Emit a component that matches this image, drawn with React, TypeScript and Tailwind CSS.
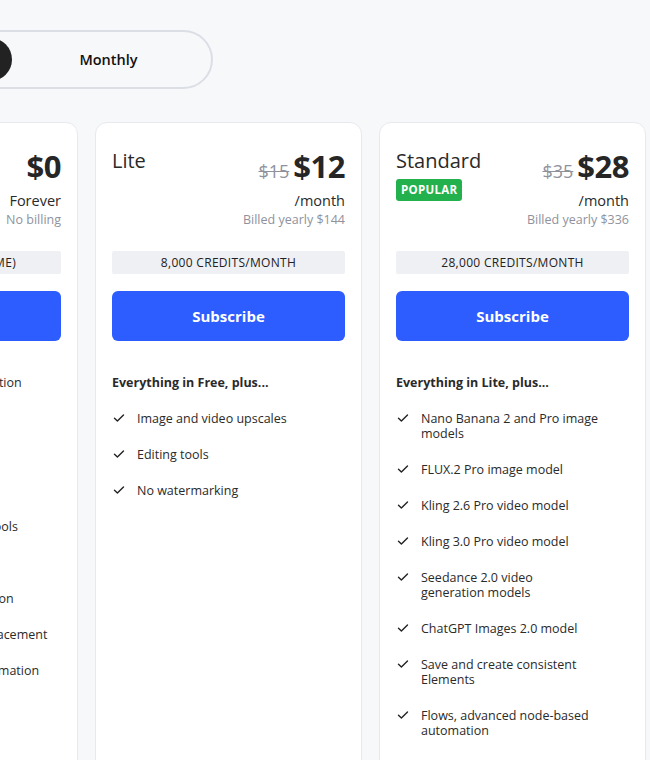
import React from "react";

type Plan = {
  name: string;
  old?: string;
  price: string;
  per: string;
  billed: string;
  credits: string;
  popular?: boolean;
  heading?: string;
  items: string[][];
};

const plans: Plan[] = [
  {
    name: "Free",
    price: "$0",
    per: "Forever",
    billed: "No billing",
    credits: "150 CREDITS (ONE TIME)",
    items: [
      ["Images and video generation"],
      ["Daily free credits"],
      ["Community feed"],
      ["Basic image models"],
      ["Essential image editing tools"],
      ["Infinite canvas"],
      ["Realtime canvas generation"],
      ["Background and sky replacement"],
      ["Flows and workflow automation"],
    ],
  },
  {
    name: "Lite",
    old: "$15",
    price: "$12",
    per: "/month",
    billed: "Billed yearly $144",
    credits: "8,000 CREDITS/MONTH",
    heading: "Everything in Free, plus...",
    items: [["Image and video upscales"], ["Editing tools"], ["No watermarking"]],
  },
  {
    name: "Standard",
    old: "$35",
    price: "$28",
    per: "/month",
    billed: "Billed yearly $336",
    credits: "28,000 CREDITS/MONTH",
    popular: true,
    heading: "Everything in Lite, plus...",
    items: [
      ["Nano Banana 2 and Pro image", "models"],
      ["FLUX.2 Pro image model"],
      ["Kling 2.6 Pro video model"],
      ["Kling 3.0 Pro video model"],
      ["Seedance 2.0 video", "generation models"],
      ["ChatGPT Images 2.0 model"],
      ["Save and create consistent", "Elements"],
      ["Flows, advanced node-based", "automation"],
    ],
  },
];

function Check() {
  return (
    <svg width="12" height="12" viewBox="0 0 12 12" fill="none" className="mt-[1px] shrink-0">
      <path d="M1.5 6.3 L4.4 9 L10.5 3" stroke="#222" strokeWidth="1.4" strokeLinecap="round" strokeLinejoin="round" />
    </svg>
  );
}

function Card({ p }: { p: Plan }) {
  return (
    <div className="w-[267px] shrink-0 bg-white rounded-xl border border-[#e8e9ef] px-4 pt-[25px] pb-10">
      <div className="flex justify-between items-start">
        <div className="flex flex-col items-start">
          <div className="text-[20px] leading-[26px] text-[#2a2a2a]">{p.name}</div>
          {p.popular && (
            <div className="mt-[5px] bg-[#22b14c] text-white text-[11.5px] font-bold leading-[22px] px-[5px] rounded-[3px] tracking-[0.3px]">
              POPULAR
            </div>
          )}
        </div>
        <div className="flex flex-col items-end">
          <div className="flex items-baseline gap-[4px] leading-none">
            {p.old && <span className="text-[18px] font-medium text-[#8f929d] line-through">{p.old}</span>}
            <span className="text-[31px] font-bold text-[#262626] leading-[36px] tracking-[-0.5px]">{p.price}</span>
          </div>
          <div className="text-[14.5px] text-[#2a2a2a] mt-[8px] leading-[18px]">{p.per}</div>
          <div className="text-[12.5px] text-[#8f929d] mt-[2px] leading-[16px]">{p.billed}</div>
        </div>
      </div>
      <div className="mt-[23px] h-[23px] bg-[#eff0f3] rounded-[2px] flex items-center justify-center text-[12px] font-medium text-[#222] tracking-[0.3px] whitespace-nowrap overflow-hidden">
        {p.credits}
      </div>
      <button className="mt-[17px] w-full h-[50px] bg-[#2d5cff] rounded-md text-white text-[15px] font-bold">
        Subscribe
      </button>
      <div className="mt-[34px] flex flex-col gap-[21px]">
        {p.heading && <div className="text-[12.5px] font-bold text-[#2a2a2a] leading-[15px]">{p.heading}</div>}
        {p.items.map((it) => (
          <div key={it[0]} className="flex gap-3 pl-[1px] text-[12.5px] leading-[15px] text-[#2a2a2a] whitespace-nowrap">
            <Check />
            <div className="flex flex-col">
              {it.map((line) => (
                <span key={line}>{line}</span>
              ))}
            </div>
          </div>
        ))}
      </div>
    </div>
  );
}

export default function App() {
  return (
    <div className="min-h-screen w-[650px] overflow-hidden bg-[#f7f8fa] font-['Open_Sans',sans-serif]">
      <div className="pt-[30px] ml-[-198px]">
        <div className="w-[411px] h-[59px] rounded-full border-2 border-[#dcdee6] p-[6px] flex">
          <div className="w-[202px] shrink-0 rounded-full bg-[#222] text-white flex items-center justify-center text-[14.5px] font-semibold">
            Yearly
          </div>
          <div className="flex-1 flex items-center justify-center text-[14.5px] font-semibold text-[#111]">Monthly</div>
        </div>
      </div>
      <div className="mt-[33px] ml-[-189px] flex gap-[17px]">
        {plans.map((p) => (
          <Card key={p.name} p={p} />
        ))}
      </div>
    </div>
  );
}
